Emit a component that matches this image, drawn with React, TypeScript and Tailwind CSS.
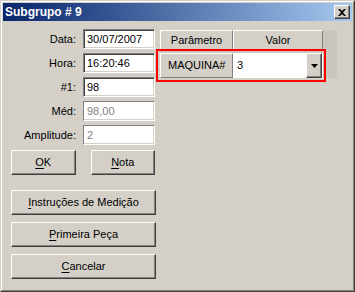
const raised =
  'border border-white border-r-[#404040] border-b-[#404040] shadow-[inset_-1px_-1px_0_#808080]'
const sunken =
  'border border-[#808080] border-r-white border-b-white shadow-[inset_1px_1px_0_#404040,inset_-1px_-1px_0_#d4d0c8]'
const sunkenOff = 'border border-[#808080] border-r-white border-b-white shadow-[inset_-1px_-1px_0_#d4d0c8]'

function Field({ label, value, disabled }: { label: string; value: string; disabled?: boolean }) {
  return (
    <div className="flex items-center h-[20px]">
      <div className="w-[73px] text-right text-[11px] text-black">{label}</div>
      <div
        className={`ml-[7px] w-[72px] h-[20px] bg-white flex items-center pl-[3px] text-[11px] ${
          disabled ? sunkenOff + ' text-[#808080]' : sunken + ' text-black'
        }`}
      >
        {value}
      </div>
    </div>
  )
}

function Btn({ width, accel, rest }: { width: string; accel: string; rest: string }) {
  return (
    <div className={`${width} h-[25px] ${raised} flex items-center justify-center text-[11px] text-black`}>
      <span>
        <span className="underline underline-offset-2">{accel}</span>
        {rest}
      </span>
    </div>
  )
}

export default function App() {
  return (
    <div className="w-[355px] h-[292px] bg-[#d4d0c8] border border-[#d4d0c8] border-r-[#404040] border-b-[#404040] font-['Liberation_Sans',Arial,sans-serif] select-none">
      <div className="h-full flex flex-col border border-white border-r-[#808080] border-b-[#808080] p-px">
        {/* title bar */}
        <div className="h-[18px] flex items-center justify-between pl-[2px] pr-[2px] bg-linear-to-r from-[#0a246a] to-[#a6caf0]">
          <div className="text-white font-bold text-[12px] leading-none">Subgrupo # 9</div>
          <div className={`w-[16px] h-[14px] bg-[#d4d0c8] ${raised} flex items-center justify-center`}>
            <svg width="8" height="7" viewBox="0 0 8 7">
              <path d="M0 0h2l2 2 2-2h2L5 3.5 8 7H6L4 5 2 7H0l3-3.5z" fill="#000" />
            </svg>
          </div>
        </div>

        <div className="flex-1 flex pt-[8px]">
          {/* left column */}
          <div className="w-[152px] flex flex-col">
            <div className="flex flex-col gap-[4px]">
              <Field label="Data:" value="30/07/2007" />
              <Field label="Hora:" value="16:20:46" />
              <Field label="#1:" value="98" />
              <Field label="Méd:" value="98,00" disabled />
              <Field label="Amplitude:" value="2" disabled />
            </div>
            <div className="ml-[8px] mt-[5px] flex gap-[15px]">
              <Btn width="w-[65px]" accel="O" rest="K" />
              <Btn width="w-[65px]" accel="N" rest="ota" />
            </div>
            <div className="ml-[8px] mt-[15px] flex flex-col gap-[7px]">
              <Btn width="w-[145px]" accel="I" rest="nstruções de Medição" />
              <Btn width="w-[145px]" accel="P" rest="rimeira Peça" />
              <Btn width="w-[145px]" accel="C" rest="ancelar" />
            </div>
          </div>

          {/* grid */}
          <div className="ml-[5px] mt-[1px] self-start relative w-[177px] bg-[#cac6be] flex flex-col">
            <div className="flex h-[21px]">
              <div className="w-[73px] border border-white border-r-[#808080] border-b-[#808080] bg-[#d4d0c8] flex items-center justify-center text-[11px]">
                Parâmetro
              </div>
              <div className="w-[90px] border border-white border-r-[#808080] border-b-[#808080] bg-[#d4d0c8] flex items-center justify-center text-[11px]">
                Valor
              </div>
            </div>
            <div className="flex h-[25px] mt-[2px]">
              <div className="w-[73px] border border-white border-r-[#808080] border-b-[#808080] bg-[#d4d0c8] flex items-center pl-[7px] text-[11px]">
                MAQUINA#
              </div>
              <div className="w-[90px] bg-white relative flex items-center pl-[4px] text-[11px]">
                3
                <div className={`absolute right-[1px] top-0 w-[16px] h-[25px] bg-[#d4d0c8] ${raised} flex items-center justify-center`}>
                  <svg width="7" height="4" viewBox="0 0 7 4">
                    <path d="M0 0h7L3.5 4z" fill="#000" />
                  </svg>
                </div>
              </div>
            </div>
            <div className="absolute left-[-4px] top-[19px] w-[170px] h-[33px] border-2 border-[#ff0000]" />
          </div>
        </div>
      </div>
    </div>
  )
}
